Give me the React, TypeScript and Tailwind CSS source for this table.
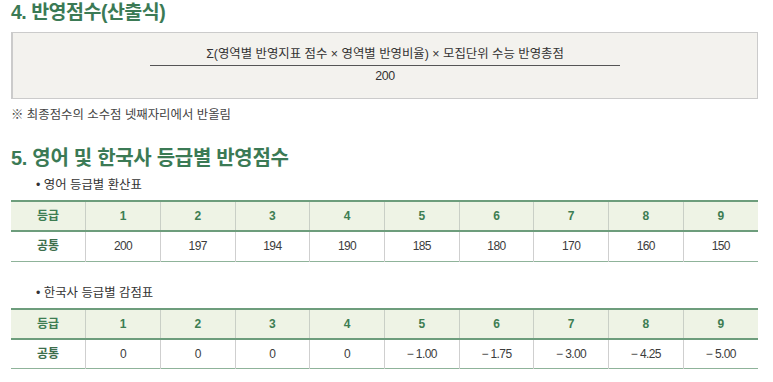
import React from 'react';

const font = { fontFamily: '"Liberation Sans", "Noto Sans CJK KR", sans-serif' };

const grades = ['1', '2', '3', '4', '5', '6', '7', '8', '9'];

function GradeTable({ values }: { values: string[] }) {
  return (
    <table className="w-[747px] table-fixed border-collapse text-[12px]">
      <thead>
        <tr className="h-[30px] bg-[#eef3e5] border-t-2 border-b-2 border-[#6d9d7c]">
          <th className="font-bold text-[#3d7d52] border-r border-[#c9cfc6]">등급</th>
          {grades.map((g, i) => (
            <th
              key={g}
              className={`font-bold text-[#3d7d52] ${i < grades.length - 1 ? 'border-r border-[#c9cfc6]' : ''}`}
            >
              {g}
            </th>
          ))}
        </tr>
      </thead>
      <tbody>
        <tr className="h-[30px] bg-white border-b border-[#8fb39a]">
          <td className="text-center font-bold text-[#3d6e4c] border-r border-[#cfcfcf]">공통</td>
          {values.map((v, i) => (
            <td
              key={i}
              className={`text-center text-[#3c3c3c] tracking-[-0.6px] ${i < values.length - 1 ? 'border-r border-[#cfcfcf]' : ''}`}
            >
              {v}
            </td>
          ))}
        </tr>
      </tbody>
    </table>
  );
}

export default function App() {
  return (
    <div className="w-[773px] h-[382px] bg-white overflow-hidden pl-[11px]" style={font}>
      {/* 4. 반영점수 */}
      <h2 className="text-[19.5px] font-bold text-[#3b7a55] leading-[24px] tracking-[-0.5px]">
        4. 반영점수(산출식)
      </h2>
      <div className="mt-[8px] w-[747px] h-[67px] bg-[#f3f2ee] border border-[#cbcbcb] border-l-2 flex flex-col items-center pt-[13px]">
        <div className="w-[470px] border-b border-[#555] text-center text-[12.4px] text-[#333] leading-[17px] pb-[2px]">
          Σ(영역별 반영지표 점수 × 영역별 반영비율) × 모집단위 수능 반영총점
        </div>
        <div className="text-[12.4px] text-[#333] leading-[17px] mt-[2px] tracking-[-0.4px]">200</div>
      </div>
      <p className="mt-[8px] text-[12.4px] text-[#444] leading-[17px]">※ 최종점수의 소수점 넷째자리에서 반올림</p>

      {/* 5. 영어 및 한국사 */}
      <h2 className="mt-[21px] text-[20px] font-bold text-[#3b7a55] leading-[26px] tracking-[-0.3px]">
        5. 영어 및 한국사 등급별 반영점수
      </h2>
      <p className="mt-[6px] pl-[25px] text-[12.4px] text-[#333] leading-[17px]">• 영어 등급별 환산표</p>
      <div className="mt-[6px]">
        <GradeTable values={['200', '197', '194', '190', '185', '180', '170', '160', '150']} />
      </div>
      <p className="mt-[23px] pl-[25px] text-[12.4px] text-[#333] leading-[17px]">• 한국사 등급별 감점표</p>
      <div className="mt-[6px]">
        <GradeTable values={['0', '0', '0', '0', '− 1.00', '− 1.75', '− 3.00', '− 4.25', '− 5.00']} />
      </div>
    </div>
  );
}
